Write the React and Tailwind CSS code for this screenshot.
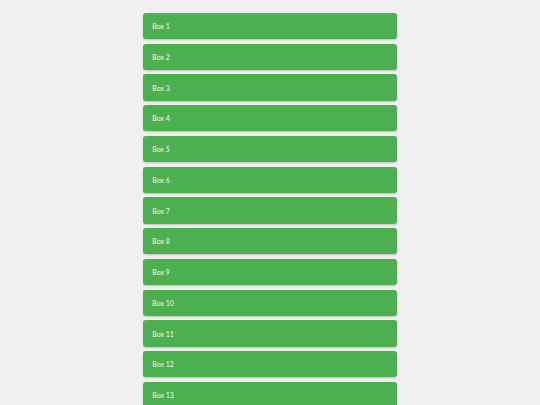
export default function App() {
  const boxes = Array.from({ length: 13 }, (_, i) => i + 1);
  return (
    <div className="w-[540px] h-[405px] overflow-hidden bg-[#f0f0f0] flex justify-center pt-[12.75px]" style={{ fontFamily: 'Lato, "Open Sans", sans-serif' }}>
      <div className="w-[253.5px] flex flex-col gap-[4.5px]">
        {boxes.map((n) => (
          <div key={n} className="h-[26.25px] shrink-0 bg-[#4caf50] rounded-[3px] shadow-[0_1px_2px_rgba(0,0,0,0.2)] flex items-center pl-[9px] pt-[1px] text-[7px] text-[#f4faf4]">
            Box {n}
          </div>
        ))}
      </div>
    </div>
  );
}
